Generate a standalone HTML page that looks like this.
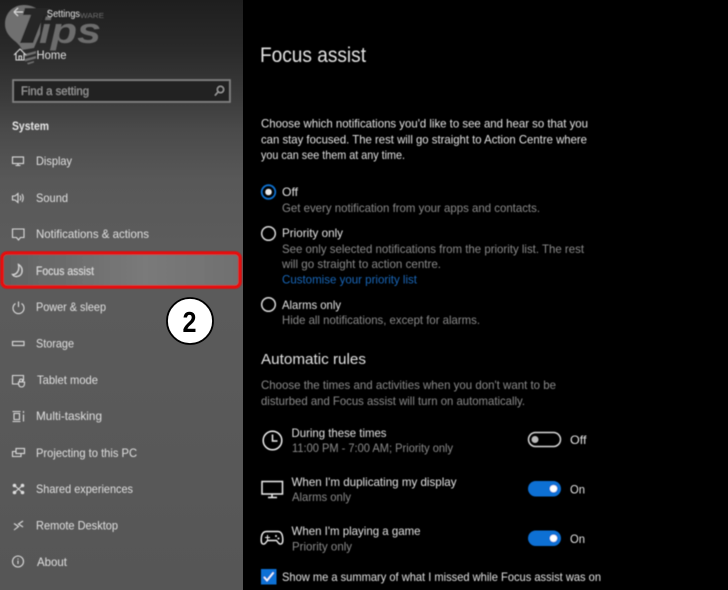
<!DOCTYPE html>
<html><head><meta charset="utf-8"><style>
html,body{margin:0;padding:0;background:#000;width:728px;height:590px;overflow:hidden}
svg{display:block;position:absolute;left:0;top:0}
text{font-family:"Liberation Sans",sans-serif;font-size:12px;fill:#fff}
.s text{fill:#e0e0e0}
.g{fill:#8a8a8a}
.w{fill:#e2e2e2}
.ic{fill:none;stroke:#dcdcdc;stroke-width:1.100}
</style></head><body>
<svg width="728" height="590" viewBox="0 0 728 590" xmlns="http://www.w3.org/2000/svg">
<defs>
<linearGradient id="bg" x1="0" y1="0" x2="0" y2="1">
<stop offset="0" stop-color="#1e1e1e"/><stop offset=".085" stop-color="#2a2a2a"/><stop offset=".17" stop-color="#3c3c3c"/><stop offset=".22" stop-color="#4a4a4a"/><stop offset=".305" stop-color="#585858"/><stop offset=".42" stop-color="#5c5c5c"/><stop offset="1" stop-color="#565656"/>
</linearGradient>
<linearGradient id="hl" x1="0" y1="0" x2="1" y2="0"><stop offset="0" stop-color="#606060"/><stop offset=".6" stop-color="#7a7a7a"/><stop offset="1" stop-color="#707070"/></linearGradient>
<filter id="b" x="-5%" y="-5%" width="110%" height="110%"><feGaussianBlur stdDeviation="0.4"/></filter>
</defs>
<rect width="728" height="590" fill="#000"/>
<rect width="243" height="590" fill="url(#bg)"/>
<g filter="url(#b)">
<!-- watermark -->
<text x="80" y="18" style="font-size:7px;fill:#6e6e6e" textLength="24" lengthAdjust="spacingAndGlyphs">WARE</text>
<path d="M24 5C13 5 5 13 5 24c0 9 6 14 11 18 3 3 5 5 6 8l12-2 6-14 2-22C37 8 31 5 24 5Z" fill="#707070"/>
<path d="M25 54l11-3v2.500l-11 3ZM25 59l11-3v2.500l-11 3ZM27 63l7-2v1.500l-6 2Z" fill="#707070"/>
<text x="39" y="43" style="font-size:36px;font-weight:bold;font-style:italic;fill:#6c6c6c" textLength="62" lengthAdjust="spacingAndGlyphs">ips</text>
<path d="M25 8H50L48 15H44L33 43H20L31 15H23Z" fill="#252525"/>
<!-- top -->
<path d="M14 12h9M14 12l4-4M14 12l4 4" class="ic"/>
<text x="47" y="17" style="font-size:10.500px" class="w" textLength="33" lengthAdjust="spacingAndGlyphs">Settings</text>
<path d="M14 55l6-6 6 6M16 53.500v6.500h8v-6.500M19 60v-4h2.500v4" class="ic"/>
<text x="36.500" y="59" class="w" textLength="30" lengthAdjust="spacingAndGlyphs">Home</text>
<!-- search -->
<rect x="13" y="80" width="217" height="22" fill="#232323" stroke="#858585" stroke-width="1.600"/>
<text x="21" y="95" style="fill:#9a9a9a" textLength="68" lengthAdjust="spacingAndGlyphs">Find a setting</text>
<circle cx="220.500" cy="89.500" r="3.200" fill="none" stroke="#aaa"/><path d="M218 92l-3 3.500" stroke="#aaa" fill="none"/>
<text x="12" y="130" style="font-weight:bold;fill:#e6e6e6" textLength="37" lengthAdjust="spacingAndGlyphs">System</text>
<!-- highlight -->
<rect x="2" y="253" width="238" height="34" rx="5" fill="url(#hl)" stroke="#e6080c" stroke-width="3.500"/>
<!-- nav -->
<g class="s">
<text x="36" y="165" textLength="36" lengthAdjust="spacingAndGlyphs">Display</text>
<text x="36" y="202" textLength="32" lengthAdjust="spacingAndGlyphs">Sound</text>
<text x="36" y="238" textLength="113" lengthAdjust="spacingAndGlyphs">Notifications &amp; actions</text>
<text x="36" y="275" textLength="58" lengthAdjust="spacingAndGlyphs">Focus assist</text>
<text x="36" y="311" textLength="70" lengthAdjust="spacingAndGlyphs">Power &amp; sleep</text>
<text x="36" y="347.500" textLength="38" lengthAdjust="spacingAndGlyphs">Storage</text>
<text x="37" y="384" textLength="61" lengthAdjust="spacingAndGlyphs">Tablet mode</text>
<text x="36" y="420" textLength="66" lengthAdjust="spacingAndGlyphs">Multi-tasking</text>
<text x="36" y="457" textLength="101" lengthAdjust="spacingAndGlyphs">Projecting to this PC</text>
<text x="36" y="493" textLength="97" lengthAdjust="spacingAndGlyphs">Shared experiences</text>
<text x="36" y="529.500" textLength="82" lengthAdjust="spacingAndGlyphs">Remote Desktop</text>
<text x="37" y="566" textLength="30" lengthAdjust="spacingAndGlyphs">About</text>
</g>
<!-- nav icons -->
<g class="ic">
<rect x="12.500" y="157" width="11" height="6.500"/><path d="M15.500 165.500h5M18 163.500v2"/>
<path d="M12.500 196v4h2.500l3 2.500v-9l-3 2.500ZM20 195.500c1 1.500 1 3.500 0 5M22 194c1.500 2.500 1.500 5.500 0 8"/>
<path d="M12.500 229h11.500v8.500h-3.500l-2 2.500-2-2.500h-4Z"/>
<path d="M18.500 264.500C24 268 23 276 17 276.500C15 276.700 13.500 276 12.500 274.500C16 275 20 271 18.500 264.500Z"/>
<path d="M15.500 303.500a5.500 5.500 0 1 0 6 0M18.500 301.500v5.500"/>
<rect x="12.500" y="341.500" width="11.500" height="4"/>
<path d="M23.500 381v-5.500h-11v8.500h6.500"/><circle cx="21" cy="380.500" r="1.500"/><path d="M18.500 383c0 3 1.500 4 3 4s3-1 3-3.500v-1.500h-6Z"/>
<path d="M12.500 411.500h8M12.500 421.500h8M14 413.500h5.500v6H14ZM23.500 411v2M23.500 414.500v7"/>
<rect x="16" y="448.500" width="8.500" height="5"/><path d="M16 451.500h-3.500v5h8.500v-3"/>
<path d="M14.500 485.500l8 7M22.500 485.500l-8 7"/>
</g>
<g fill="#dedede"><circle cx="14.500" cy="485.500" r="1.800"/><circle cx="22.500" cy="485.500" r="1.800"/><circle cx="14.500" cy="492.500" r="1.800"/><circle cx="22.500" cy="492.500" r="1.800"/></g>
<g class="ic">
<path d="M14 523.500l4.500 3-4.500 3.500M23 521l-4.500 3 4.500 3"/>
<circle cx="18" cy="561.500" r="5.500"/><path d="M18 560.500v3.500M18 558.500v1"/>
</g>
<!-- Right column -->
<text x="260" y="62" style="font-size:21px" class="w" textLength="106" lengthAdjust="spacingAndGlyphs">Focus assist</text>
<g>
<text x="261" y="127.500" class="w" textLength="327" lengthAdjust="spacingAndGlyphs">Choose which notifications you'd like to see and hear so that you</text>
<text x="261" y="143.500" class="w" textLength="326" lengthAdjust="spacingAndGlyphs">can stay focused. The rest will go straight to Action Centre where</text>
<text x="261" y="159" class="w" textLength="144" lengthAdjust="spacingAndGlyphs">you can see them at any time.</text>
<text x="282" y="196" class="w" textLength="16" lengthAdjust="spacingAndGlyphs">Off</text>
<text x="282" y="237" class="w" textLength="61" lengthAdjust="spacingAndGlyphs">Priority only</text>
<text x="282" y="309" class="w" textLength="59" lengthAdjust="spacingAndGlyphs">Alarms only</text>
</g>
<text x="282" y="212" class="g" textLength="258" lengthAdjust="spacingAndGlyphs">Get every notification from your apps and contacts.</text>
<text x="282" y="253" class="g" textLength="302" lengthAdjust="spacingAndGlyphs">See only selected notifications from the priority list. The rest</text>
<text x="282" y="268" class="g" textLength="159" lengthAdjust="spacingAndGlyphs">will go straight to action centre.</text>
<text x="282" y="283.500" style="fill:#1a66b8" textLength="135" lengthAdjust="spacingAndGlyphs">Customise your priority list</text>
<text x="282" y="324" class="g" textLength="198" lengthAdjust="spacingAndGlyphs">Hide all notifications, except for alarms.</text>
<!-- radios -->
<circle cx="268.500" cy="192" r="6.800" fill="none" stroke="#0a6ecc" stroke-width="1.800"/><circle cx="268.500" cy="192" r="3.300" fill="#e8e8e8"/>
<circle cx="268.500" cy="233.500" r="6.800" fill="none" stroke="#d8d8d8" stroke-width="1.500"/>
<circle cx="268.500" cy="304.500" r="6.800" fill="none" stroke="#d8d8d8" stroke-width="1.500"/>
<text x="261" y="364" style="font-size:15px" class="w" textLength="105" lengthAdjust="spacingAndGlyphs">Automatic rules</text>
<text x="261" y="389" class="g" textLength="295" lengthAdjust="spacingAndGlyphs">Choose the times and activities when you don't want to be</text>
<text x="261" y="405" class="g" textLength="264" lengthAdjust="spacingAndGlyphs">disturbed and Focus assist will turn on automatically.</text>
<text x="291.500" y="437" class="w" textLength="95" lengthAdjust="spacingAndGlyphs">During these times</text>
<text x="292" y="452" class="g" textLength="161" lengthAdjust="spacingAndGlyphs">11:00 PM - 7:00 AM; Priority only</text>
<text x="291.500" y="486" class="w" textLength="165" lengthAdjust="spacingAndGlyphs">When I'm duplicating my display</text>
<text x="292" y="501" class="g" textLength="59" lengthAdjust="spacingAndGlyphs">Alarms only</text>
<text x="291.500" y="535" class="w" textLength="129" lengthAdjust="spacingAndGlyphs">When I'm playing a game</text>
<text x="292" y="550.500" class="g" textLength="60" lengthAdjust="spacingAndGlyphs">Priority only</text>
<text x="282" y="581" class="w" textLength="319" lengthAdjust="spacingAndGlyphs">Show me a summary of what I missed while Focus assist was on</text>
<!-- rule icons -->
<circle cx="272.500" cy="440.500" r="9.300" fill="none" stroke="#eee" stroke-width="1.500"/><path d="M272.500 434.500v6.500h5" fill="none" stroke="#eee" stroke-width="1.500"/>
<rect x="262" y="481.500" width="20.500" height="12.500" fill="none" stroke="#eee" stroke-width="1.500"/><path d="M272 494v4M268 497.500h9" fill="none" stroke="#eee" stroke-width="1.500"/>
<path d="M267 531.500h11c3 0 4 2 4.500 5 .5 3 .5 7-1.500 7.500-2 .5-3-1.500-4.500-3.500h-9c-1.500 2-2.500 4-4.500 3.500-2-.5-2-4.500-1.500-7.500.5-3 2-5 5-5Z" fill="none" stroke="#eee" stroke-width="1.400"/>
<path d="M265 537.500h5M267.500 535v5" stroke="#eee" fill="none"/><circle cx="276" cy="536" r="1" fill="#eee"/><circle cx="278.500" cy="538.500" r="1" fill="#eee"/>
<!-- toggles -->
<rect x="528.500" y="432.500" width="32" height="14" rx="7" fill="none" stroke="#d8d8d8" stroke-width="1.500"/><circle cx="535" cy="439.500" r="3.500" fill="#bbb"/>
<rect x="528" y="481" width="33" height="15.500" rx="7.700" fill="#0a6fd4"/><circle cx="553.500" cy="488.700" r="3.600" fill="#fff"/>
<rect x="528" y="530.500" width="33" height="15.500" rx="7.700" fill="#0a6fd4"/><circle cx="553.500" cy="538.300" r="3.600" fill="#fff"/>
<text x="570" y="444" class="w" textLength="16.500" lengthAdjust="spacingAndGlyphs">Off</text>
<text x="570" y="493.500" class="w" textLength="15" lengthAdjust="spacingAndGlyphs">On</text>
<text x="570" y="543" class="w" textLength="15" lengthAdjust="spacingAndGlyphs">On</text>
<!-- checkbox -->
<rect x="261" y="569" width="15.500" height="15.500" fill="#0a6fd4"/><path d="M264 577l3 3.500 6.500-8" fill="none" stroke="#fff" stroke-width="1.400"/>
</g>
<!-- badge -->
<circle cx="190" cy="321" r="23" fill="#fff" stroke="#000" stroke-width="1.800"/>
<text x="189.500" y="332" text-anchor="middle" style="font-size:29px;font-weight:bold;fill:#000" textLength="14" lengthAdjust="spacingAndGlyphs">2</text>
</svg>
</body></html>
